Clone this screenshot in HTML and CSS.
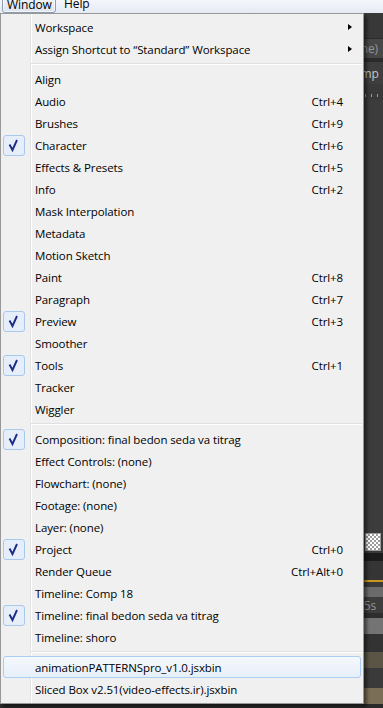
FILE: index.html
```html
<!DOCTYPE html>
<html>
<head>
	<title>Window menu</title>
	<link rel="stylesheet" href="styles.css">
</head>
<body>
	<div class="menubar">
		<span class="top-item open">Window</span>
		<span class="top-item">Help</span>
	</div>

	<div class="stage">
		<!-- app panels behind the menu -->
		<div class="band b-top"></div>
		<div class="band b-tab"><span class="panel-text dim">(none)</span></div>
		<div class="band b-line"></div>
		<div class="band b-comp"><span class="panel-text">Comp 18</span></div>
		<div class="band b-ruler"></div>
		<div class="band b-view"></div>
		<div class="band b-tools"><span class="checker"></span></div>
		<div class="band b-black"></div>
		<div class="band b-dark"></div>
		<div class="band b-yellow"></div>
		<div class="band b-dark2"></div>
		<div class="band b-gray"></div>
		<div class="band b-time"><span class="panel-text dim">05s</span></div>
		<div class="band b-dark3"></div>
		<div class="band b-gray2"></div>
		<div class="band b-dark4"></div>
		<div class="band b-olive"></div>
		<div class="band b-dark5"></div>
		<div class="band b-olive2"></div>
		<div class="band b-bottom"></div>

		<div class="menu">
			<div class="item"><span class="check"></span><span class="label">Workspace</span><span class="arrow"></span></div>
			<div class="item"><span class="check"></span><span class="label">Assign Shortcut to “Standard” Workspace</span><span class="arrow"></span></div>
			<div class="sep"></div>
			<div class="item"><span class="check"></span><span class="label">Align</span><span class="key"></span></div>
			<div class="item"><span class="check"></span><span class="label">Audio</span><span class="key">Ctrl+4</span></div>
			<div class="item"><span class="check"></span><span class="label">Brushes</span><span class="key">Ctrl+9</span></div>
			<div class="item"><span class="check on"><svg width="22" height="21" viewBox="0 0 22 21"><polyline points="6.5,9.5 9.5,15 14,5" /></svg></span><span class="label">Character</span><span class="key">Ctrl+6</span></div>
			<div class="item"><span class="check"></span><span class="label">Effects &amp; Presets</span><span class="key">Ctrl+5</span></div>
			<div class="item"><span class="check"></span><span class="label">Info</span><span class="key">Ctrl+2</span></div>
			<div class="item"><span class="check"></span><span class="label">Mask Interpolation</span><span class="key"></span></div>
			<div class="item"><span class="check"></span><span class="label">Metadata</span><span class="key"></span></div>
			<div class="item"><span class="check"></span><span class="label">Motion Sketch</span><span class="key"></span></div>
			<div class="item"><span class="check"></span><span class="label">Paint</span><span class="key">Ctrl+8</span></div>
			<div class="item"><span class="check"></span><span class="label">Paragraph</span><span class="key">Ctrl+7</span></div>
			<div class="item"><span class="check on"><svg width="22" height="21" viewBox="0 0 22 21"><polyline points="6.5,9.5 9.5,15 14,5" /></svg></span><span class="label">Preview</span><span class="key">Ctrl+3</span></div>
			<div class="item"><span class="check"></span><span class="label">Smoother</span><span class="key"></span></div>
			<div class="item"><span class="check on"><svg width="22" height="21" viewBox="0 0 22 21"><polyline points="6.5,9.5 9.5,15 14,5" /></svg></span><span class="label">Tools</span><span class="key">Ctrl+1</span></div>
			<div class="item"><span class="check"></span><span class="label">Tracker</span><span class="key"></span></div>
			<div class="item"><span class="check"></span><span class="label">Wiggler</span><span class="key"></span></div>
			<div class="sep"></div>
			<div class="item"><span class="check on"><svg width="22" height="21" viewBox="0 0 22 21"><polyline points="6.5,9.5 9.5,15 14,5" /></svg></span><span class="label">Composition: final bedon seda va titrag</span><span class="key"></span></div>
			<div class="item"><span class="check"></span><span class="label">Effect Controls: (none)</span><span class="key"></span></div>
			<div class="item"><span class="check"></span><span class="label">Flowchart: (none)</span><span class="key"></span></div>
			<div class="item"><span class="check"></span><span class="label">Footage: (none)</span><span class="key"></span></div>
			<div class="item"><span class="check"></span><span class="label">Layer: (none)</span><span class="key"></span></div>
			<div class="item"><span class="check on"><svg width="22" height="21" viewBox="0 0 22 21"><polyline points="6.5,9.5 9.5,15 14,5" /></svg></span><span class="label">Project</span><span class="key">Ctrl+0</span></div>
			<div class="item"><span class="check"></span><span class="label">Render Queue</span><span class="key">Ctrl+Alt+0</span></div>
			<div class="item"><span class="check"></span><span class="label">Timeline: Comp 18</span><span class="key"></span></div>
			<div class="item"><span class="check on"><svg width="22" height="21" viewBox="0 0 22 21"><polyline points="6.5,9.5 9.5,15 14,5" /></svg></span><span class="label">Timeline: final bedon seda va titrag</span><span class="key"></span></div>
			<div class="item"><span class="check"></span><span class="label">Timeline: shoro</span><span class="key"></span></div>
			<div class="sep"></div>
			<div class="item hot"><span class="check"></span><span class="label">animationPATTERNSpro_v1.0.jsxbin</span><span class="key"></span></div>
			<div class="item"><span class="check"></span><span class="label">Sliced Box v2.51(video-effects.ir).jsxbin</span><span class="key"></span></div>
		</div>
	</div>
</body>
</html>
```

FILE: styles.css
```css
body {
	margin: 0;
	width: 383px;
	height: 708px;
	overflow: hidden;
	background-color: #3c3c3c;
	font-family: 'Open Sans', 'Noto Sans', sans-serif;
	font-size: 11.5px;
	letter-spacing: -0.1px;
	color: #000;
}

.menubar {
	height: 13px;
	display: flex;
	align-items: flex-start;
	background: linear-gradient(#f4f6fb, #e6eaf3);
	overflow: hidden;
}

.top-item {
	height: 14px;
	line-height: 12px;
	margin-top: -2px;
	padding: 0 5px;
	font-size: 12px;
	box-sizing: border-box;
}

.top-item.open {
	margin-left: 2px;
	margin-right: 3px;
	width: 54px;
	height: 15px;
	padding: 0 4px;
	border: 1px solid #8f9bb0;
	border-radius: 0 0 3px 3px;
	background: linear-gradient(#eef2f8, #dde4ee);
	box-shadow: inset 0 0 0 1px rgba(255, 255, 255, 0.6);
}

.stage {
	position: relative;
	height: 695px;
}

/* panels of the app behind the menu */
.band {
	display: flex;
	align-items: center;
	justify-content: flex-end;
	overflow: hidden;
	background-color: #3c3c3c;
}

.b-top { height: 25px; background-color: #383838; }
.b-tab { height: 20px; background-color: #474747; border-top: 1px solid #2c2c2c; box-sizing: border-box; }
.b-line { height: 4px; background-color: #2b2b2b; }
.b-comp { height: 22px; background-color: #3e3e3e; justify-content: flex-start; padding-left: 346px; }
.b-ruler {
	height: 16px;
	background-color: #393939;
	background-image: repeating-linear-gradient(to right, transparent 0 5px, #9a9a9a 5px 6px);
	background-size: 100% 3px;
	background-repeat: no-repeat;
	background-position: 0 10px;
}
.b-view { height: 430px; background-color: #3c3c3c; }
.b-tools { height: 23px; background-color: #3a3a3a; padding-right: 2px; }
.b-black { height: 8px; background-color: #1c1c1c; }
.b-dark { height: 19px; background-color: #353535; }
.b-yellow { height: 2px; background-color: #c99720; }
.b-dark2 { height: 5px; background-color: #3a3a3a; }
.b-gray { height: 10px; background-color: #6b6b6b; }
.b-time { height: 16px; background-color: #3d3d3d; justify-content: flex-start; padding-left: 357px; }
.b-dark3 { height: 5px; background-color: #2e2e2e; }
.b-gray2 { height: 16px; background-color: #747474; }
.b-dark4 { height: 18px; background-color: #333333; }
.b-olive { height: 16px; background-color: #5b5546; }
.b-dark5 { height: 20px; background-color: #3a3a3a; }
.b-olive2 { height: 16px; background-color: #7a6f56; }
.b-bottom { height: 4px; background-color: #2a2a2a; }

.panel-text {
	color: #c4c4c4;
	font-size: 12px;
	white-space: nowrap;
	padding-right: 5px;
}

.panel-text.dim {
	color: #959595;
}

.checker {
	width: 14px;
	height: 16px;
	border: 1px solid #9a9a9a;
	background-color: #fff;
	background-image: conic-gradient(#9c9c9c 25%, #fff 0 50%, #9c9c9c 0 75%, #fff 0);
	background-size: 4px 4px;
}

/* the open drop-down */
.menu {
	position: absolute;
	left: 0;
	top: 0;
	width: 358px;
	padding: 2px 2px 3px 2px;
	border: 1px solid #979797;
	background-color: #f0f0f0;
	background-image: linear-gradient(to right, transparent 29px, #e2e3e3 29px 30px, #ffffff 30px 31px, transparent 31px);
	box-shadow: 3px 3px 3px rgba(0, 0, 0, 0.45);
}

.item {
	height: 22px;
	display: flex;
	align-items: center;
	box-sizing: border-box;
	border: 1px solid transparent;
	border-radius: 3px;
}

.item.hot {
	border-color: #a9cdf3;
	background: linear-gradient(#f5f8fd, #e7eff9);
}

.check {
	width: 22px;
	height: 21px;
	margin-left: -1px;
	margin-right: 10px;
	box-sizing: border-box;
	flex: none;
}

.check.on {
	border: 1px solid #a8c8ec;
	border-radius: 3px;
	background: #e6eefa;
}

.check svg {
	display: block;
	margin: -1px;
}

.check polyline {
	fill: none;
	stroke: #1d2a86;
	stroke-width: 1.9;
	stroke-linejoin: miter;
}

.label {
	flex: 1;
	white-space: nowrap;
}

.key {
	white-space: nowrap;
	padding-right: 17px;
}

.arrow {
	width: 17px;
	height: 7px;
	position: relative;
}

.arrow::after {
	content: "";
	position: absolute;
	left: 5px;
	top: 0;
	border-left: 4px solid #000;
	border-top: 3.5px solid transparent;
	border-bottom: 3.5px solid transparent;
}

.sep {
	height: 8px;
	margin-left: 28px;
	margin-right: -1px;
	background: linear-gradient(transparent 3px, #e0e0e0 3px 4px, #ffffff 4px 5px, transparent 5px);
}
```
